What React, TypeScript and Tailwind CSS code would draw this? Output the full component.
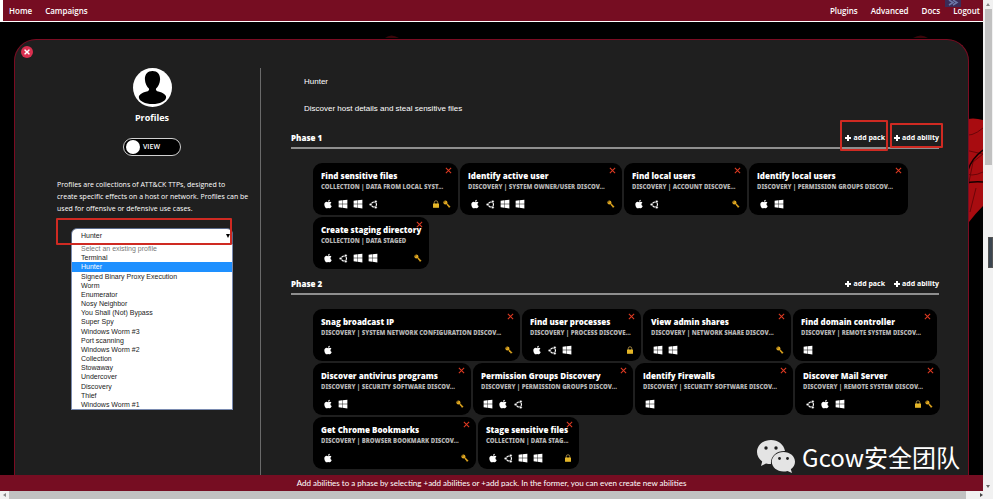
import React from "react";
import { FaApple, FaWindows, FaTimes } from "react-icons/fa";

type Os = "a" | "w" | "u";
type Mark = "lock" | "key";
type Ability = { title: string; tactic: string; os: Os[]; marks: Mark[]; width: string };

const phases: { name: string; abilities: Ability[] }[] = [
  {
    name: "Phase 1",
    abilities: [
      { title: "Find sensitive files", tactic: "COLLECTION | DATA FROM LOCAL SYST...", os: ["a", "w", "w", "u"], marks: ["lock", "key"], width: "w-[145px]" },
      { title: "Identify active user", tactic: "DISCOVERY | SYSTEM OWNER/USER DISCOV...", os: ["a", "u", "w", "w"], marks: ["key"], width: "w-[162px]" },
      { title: "Find local users", tactic: "DISCOVERY | ACCOUNT DISCOVE...", os: ["a", "u"], marks: ["key"], width: "w-[123px]" },
      { title: "Identify local users", tactic: "DISCOVERY | PERMISSION GROUPS DISCOV...", os: ["a", "w"], marks: [], width: "w-[159px]" },
      { title: "Create staging directory", tactic: "COLLECTION | DATA STAGED", os: ["a", "u", "w", "w"], marks: ["key"], width: "w-[116px]" },
    ],
  },
  {
    name: "Phase 2",
    abilities: [
      { title: "Snag broadcast IP", tactic: "DISCOVERY | SYSTEM NETWORK CONFIGURATION DISCOV...", os: ["a"], marks: ["key"], width: "w-[207px]" },
      { title: "Find user processes", tactic: "DISCOVERY | PROCESS DISCOVE...", os: ["a", "u", "w"], marks: ["lock"], width: "w-[119px]" },
      { title: "View admin shares", tactic: "DISCOVERY | NETWORK SHARE DISCOV...", os: ["w", "w"], marks: ["key"], width: "w-[148px]" },
      { title: "Find domain controller", tactic: "DISCOVERY | REMOTE SYSTEM DISCOV...", os: ["w"], marks: [], width: "w-[144px]" },
      { title: "Discover antivirus programs", tactic: "DISCOVERY | SECURITY SOFTWARE DISCOV...", os: ["a", "w"], marks: ["key"], width: "w-[158px]" },
      { title: "Permission Groups Discovery", tactic: "DISCOVERY | PERMISSION GROUPS DISCOV...", os: ["w", "a", "u"], marks: [], width: "w-[160px]" },
      { title: "Identify Firewalls", tactic: "DISCOVERY | SECURITY SOFTWARE DISCOV...", os: ["w"], marks: [], width: "w-[158px]" },
      { title: "Discover Mail Server", tactic: "DISCOVERY | REMOTE SYSTEM DISCOV...", os: ["u", "a", "w"], marks: ["lock", "key"], width: "w-[145px]" },
      { title: "Get Chrome Bookmarks", tactic: "DISCOVERY | BROWSER BOOKMARK DISCOV...", os: ["a"], marks: ["key"], width: "w-[163px]" },
      { title: "Stage sensitive files", tactic: "COLLECTION | DATA STAG...", os: ["a", "u", "w", "w"], marks: ["lock"], width: "w-[101px]" },
    ],
  },
];

const profiles = [
  "Select an existing profile", "Terminal", "Hunter", "Signed Binary Proxy Execution", "Worm", "Enumerator",
  "Nosy Neighbor", "You Shall (Not) Bypass", "Super Spy", "Windows Worm #3", "Port scanning", "Windows Worm #2",
  "Collection", "Stowaway", "Undercover", "Discovery", "Thief", "Windows Worm #1",
];

function UbuntuMark() {
  return (
    <svg viewBox="0 0 20 20" className="size-[9px]" fill="none" stroke="#fff" aria-hidden="true">
      <circle cx="11" cy="10" r="5.6" strokeWidth="2.4" />
      <g fill="#fff" stroke="#000" strokeWidth="1.2">
        <circle cx="3.4" cy="10" r="3" />
        <circle cx="15" cy="3.4" r="3" />
        <circle cx="15" cy="16.6" r="3" />
      </g>
    </svg>
  );
}

function OsIcon({ os }: { os: Os }) {
  if (os === "a") return <FaApple className="size-[10px]" />;
  if (os === "w") return <FaWindows className="size-[10px]" />;
  return <UbuntuMark />;
}

function KeyMark() {
  return (
    <svg viewBox="0 0 16 16" className="size-[8px]" aria-hidden="true">
      <path d="M6.5 6.5 14.2 14.2M10 10l-1.8 1.8M12.4 12.4l-1.8 1.8" stroke="#d9a01c" strokeWidth="2.4" fill="none" />
      <circle cx="4.8" cy="4.8" r="4" fill="#e3aa22" />
      <circle cx="3.6" cy="3.6" r="1.2" fill="#3a2a00" />
    </svg>
  );
}

function LockMark() {
  return (
    <svg viewBox="0 0 16 16" className="size-[8px]" aria-hidden="true">
      <path d="M4.5 8V5a3.5 3.5 0 0 1 7 0v3" stroke="#a58a4a" strokeWidth="1.8" fill="none" />
      <rect x="2" y="7" width="12" height="8.6" rx="1" fill="#f0c22c" />
      <path d="M2 10h12M2 12.6h12" stroke="#c9951a" strokeWidth=".7" />
    </svg>
  );
}

function AbilityCard({ ability }: { ability: Ability }) {
  return (
    <article className={`relative flex h-[52px] flex-col rounded-[9px] bg-black pt-[7px] pr-[7px] pl-2 whitespace-nowrap ${ability.width}`}>
      <button type="button" aria-label={`Remove ${ability.title}`} className="absolute top-1 right-[6px] text-[#e03a22]">
        <svg viewBox="0 0 8 8" className="size-[7px]" stroke="currentColor" strokeWidth="1.2" aria-hidden="true">
          <path d="M1 1l6 6M7 1L1 7" />
        </svg>
      </button>
      <h3 className="text-[8px] leading-[12px] font-extrabold text-white">{ability.title}</h3>
      <p className="font-['Noto_Sans',sans-serif] text-[6px] leading-[10px] font-black text-[#b4b4b4]">{ability.tactic}</p>
      <div className="mt-[7px] flex h-[10px] items-center justify-between pl-[2px]">
        <div className="flex items-center gap-[5px] text-white">
          {ability.os.map((os, i) => (
            <span key={i} className="flex w-[10px] justify-center"><OsIcon os={os} /></span>
          ))}
        </div>
        <div className="flex items-center gap-[3px]">
          {ability.marks.map((m) => (m === "key" ? <KeyMark key={m} /> : <LockMark key={m} />))}
        </div>
      </div>
    </article>
  );
}

function AddButton({ label, frame }: { label: string; frame?: string }) {
  return (
    <button type="button" className="relative flex items-center gap-[2px] text-[7px] leading-[10px] font-bold text-white">
      <svg viewBox="0 0 6 6" className="size-[6px]" stroke="currentColor" strokeWidth="2" aria-hidden="true">
        <path d="M3 0v6M0 3h6" />
      </svg>
      {label}
      {frame && <span className={`pointer-events-none absolute rounded-[1px] border-2 border-[#cf2a22] ${frame}`} />}
    </button>
  );
}

function Phase({ name, abilities, framed }: { name: string; abilities: Ability[]; framed: boolean }) {
  return (
    <section>
      <header className="flex h-[20px] items-center justify-between border-b-2 border-[#8f8f8f]">
        <h2 className="text-[8px] leading-[12px] font-extrabold text-white">{name}</h2>
        <div className="flex items-center gap-[9px]">
          <AddButton label="add pack" frame={framed ? "-top-[13px] -bottom-[8px] -left-[5px] -right-[3px]" : undefined} />
          <AddButton label="add ability" frame={framed ? "-top-[10px] -bottom-[5px] -left-[4px] -right-[4px]" : undefined} />
        </div>
      </header>
      <div className="-mr-[10px] mt-[14px] ml-[22px] flex flex-wrap gap-[2px]">
        {abilities.map((a) => <AbilityCard key={a.title} ability={a} />)}
      </div>
    </section>
  );
}

function Sidebar() {
  return (
    <aside className="mt-[28px] flex w-[246px] shrink-0 flex-col items-center border-r border-[#6a6a6a] pr-[13px] pl-[42px]">
      <svg viewBox="0 0 40 40" className="size-[39px] shrink-0" aria-hidden="true">
        <circle cx="20" cy="20" r="20" fill="#fff" />
        <path d="M20 3c-5 0-8 3.600-7.800 8.600.2 4.300 1.900 7.800 4.300 9.700.2 1.600-.7 2.400-2.500 2.900C9 25.500 6 27.500 6 30c0 3.800 6.500 7 14 7s14-3.200 14-7c0-2.500-3-4.500-8-5.800-1.800-.5-2.700-1.300-2.500-2.900 2.400-1.900 4.100-5.400 4.300-9.700C28 6.600 25 3 20 3z" fill="#000" />
      </svg>
      <h1 className="mt-[5px] text-[9px] leading-[12px] font-bold text-white">Profiles</h1>
      <label className="relative mt-[14px] flex h-[18px] w-[58px] shrink-0 items-center rounded-full border border-[#d0d0d0] bg-black pl-[2px]">
        <input type="checkbox" role="switch" className="size-[14px] appearance-none rounded-full bg-white" />
        <span className="ml-[3px] text-[7px] leading-[10px] font-semibold text-white">VIEW</span>
      </label>
      <p className="mt-[23px] w-full text-[7px] leading-[12px] font-medium whitespace-nowrap text-white">
        Profiles are collections of ATT&amp;CK TTPs, designed to<br />
        create specific effects on a host or network. Profiles can be<br />
        used for offensive or defensive use cases.
      </p>
      <div className="relative mt-[13px] w-[162px] font-['Liberation_Sans',Arial,sans-serif] text-[7px] text-[#222]">
        <select aria-label="Profile" defaultValue="Hunter" className="block h-[16px] w-full appearance-none rounded-t-[6px] border border-[#5a6a8a] bg-white pl-[9px]">
          {profiles.map((p) => <option key={p}>{p}</option>)}
        </select>
        <span className="pointer-events-none absolute top-[6px] right-[3px] border-x-2 border-t-4 border-x-transparent border-t-black" />
        <ul className="absolute top-full left-0 grid h-[166px] w-full auto-rows-fr border border-t-0 border-[#7a8bb0] bg-white">
          {profiles.map((p, i) => (
            <li key={p} className={`flex items-center pl-[9px] leading-none ${i === 2 ? "bg-[#1e90ff] text-white" : i === 0 ? "text-[#777]" : ""}`}>{p}</li>
          ))}
        </ul>
        <span className="pointer-events-none absolute -top-[10px] right-[1px] -left-[15px] h-[27px] rounded-[1px] border-2 border-[#cf2a22]" />
      </div>
    </aside>
  );
}

function Backdrop() {
  return (
    <svg className="absolute top-0 right-0 h-[452px] w-[620px]" viewBox="0 0 620 452" aria-hidden="true">
      <path d="M22 16q6-5 14 0zM550 16q8-5 15 0z" fill="#3a0509" />
      <path d="M600 98q10-3 20 0v86q-8 8-14 16h-6z" fill="#a80c10" />
      <path d="M600 112q8 4 20-6M604 170l6-30 10-8M600 150q8 6 20 0M607 190l6-24M602 128l18 4" stroke="#6c0508" strokeWidth="1" fill="none" />
      <path d="M600 162q9-3 20-2M605 148q4-12 15-20" stroke="#150000" strokeWidth="1.500" fill="none" />
    </svg>
  );
}

function Watermark() {
  return (
    <div className="absolute right-[23px] bottom-[2px] flex items-center gap-[7px] text-white">
      <svg viewBox="0 0 38 33" className="h-[33px] w-[38px]" aria-hidden="true">
        <path d="M14 0C6 0 0 5.300 0 12c0 4 2 7.200 5.200 9.400L4 26l5-2.600c1.600.5 3.200.7 5 .7C13.200 16 20 10.600 28 11 27 4.500 21 0 14 0z" fill="#e4e4e4" />
        <path d="M26.500 12C20 12 14.800 16.300 14.800 21.700S20 31.500 26.500 31.500c1.400 0 2.800-.2 4-.6L35 33l-1.200-3.800c2.600-1.800 4.200-4.500 4.200-7.500C38 16.300 33 12 26.500 12z" fill="#e4e4e4" />
        <g fill="#1f1f1f"><circle cx="9" cy="8" r="1.700" /><circle cx="19" cy="8" r="1.700" /><circle cx="22.500" cy="18.500" r="1.400" /><circle cx="30.500" cy="18.500" r="1.400" /></g>
      </svg>
      <span className="font-['Noto_Sans_CJK_SC',sans-serif] text-[24px] leading-[32px]">Gcow安全团队</span>
    </div>
  );
}

export default function App() {
  return (
    <div className="flex h-screen flex-col overflow-hidden bg-white font-['Open_Sans','Noto_Sans',sans-serif]">
      <div className="flex min-h-0 flex-1">
        <div className="flex min-w-0 flex-1 flex-col bg-black">
          <nav className="relative flex h-[22px] shrink-0 items-center justify-between border-b border-l-[3px] border-white bg-[#760d22] pr-[3px] pl-[6px] text-[8px] leading-[12px] font-semibold text-white">
            <div className="flex items-center gap-[13px]">
              <a href="#home">Home</a>
              <a href="#campaigns">Campaigns</a>
            </div>
            <div className="flex items-center gap-[13px]">
              <a href="#plugins">Plugins</a>
              <a href="#advanced">Advanced</a>
              <a href="#docs">Docs</a>
              <a href="#logout">Logout</a>
            </div>
            <svg viewBox="0 0 16 7" className="absolute top-0 right-[22px] h-[7px] w-[16px]" aria-hidden="true">
              <rect width="16" height="7" fill="#3b2c58" />
              <path d="M4 0l4 2.500L4 5M8 0l4 2.500L8 5" stroke="#6c78a8" strokeWidth="1.500" fill="none" />
            </svg>
          </nav>
          <main className="relative flex min-h-0 flex-1 pt-[17px] pr-[14px] pl-[14px]">
            <Backdrop />
            <div className="relative flex min-w-0 flex-1 rounded-t-[22px] border border-b-0 border-[#7a0c22] bg-[#1f1f1f]">
              <button type="button" aria-label="Close" className="absolute top-[6px] left-[6px] flex size-[12px] items-center justify-center rounded-full bg-[#d9304f] text-white">
                <FaTimes className="size-[8px]" />
              </button>
              <Sidebar />
              <div className="flex min-w-0 flex-1 flex-col gap-[6px] pt-[36px] pr-[29px] pl-[30px]">
                <div className="flex flex-col gap-[15px] pb-[8px] pl-[13px] font-['Liberation_Sans',Arial,sans-serif] text-[8px] leading-[12px] text-white">
                  <p>Hunter</p>
                  <p>Discover host details and steal sensitive files</p>
                </div>
                {phases.map((p, i) => <Phase key={p.name} {...p} framed={i === 0} />)}
              </div>
            </div>
            <Watermark />
          </main>
          <footer className="flex h-[16px] shrink-0 items-center justify-center bg-[#760d22] font-[Lato,sans-serif] text-[8px] leading-[12px] text-white">
            Add abilities to a phase by selecting +add abilities or +add pack. In the former, you can even create new abilities
          </footer>
        </div>
        <div className="relative flex w-[10px] shrink-0 flex-col items-center bg-[#f1f1f1]">
          <span className="mt-[3px] mb-[3px] border-x-2 border-b-[3px] border-x-transparent border-b-[#888]" />
          <span className="h-[156px] w-[7px] bg-[#c1c1c1]" />
          <span className="mt-auto mb-[3px] border-x-2 border-t-[3px] border-x-transparent border-t-[#666]" />
          <span className="absolute top-[237px] right-0 h-[31px] w-[5px] border border-[#555] bg-[#3c4650]" />
        </div>
      </div>
      <div className="mb-[3px] flex h-[8px] shrink-0 items-center bg-[#f1f1f1]">
        <span className="mx-[3px] border-y-2 border-r-[3px] border-y-transparent border-r-[#888]" />
        <span className="h-full flex-1 bg-[#c1c1c1]" />
        <span className="mr-[10px] ml-[14px] border-y-2 border-l-[3px] border-y-transparent border-l-[#444]" />
      </div>
    </div>
  );
}
